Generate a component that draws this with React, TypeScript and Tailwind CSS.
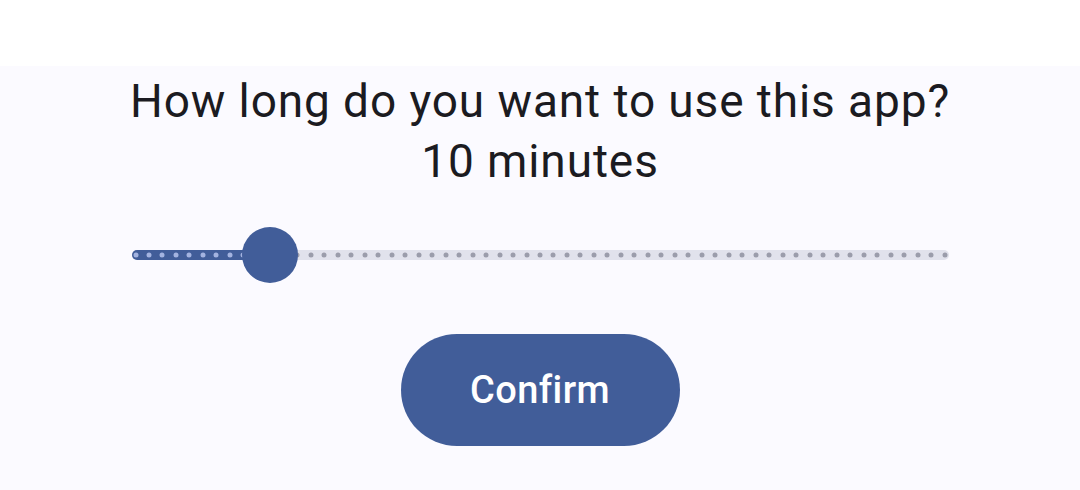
import React from "react";

const STEPS = 60;
const VALUE = 10;

function TimeSlider({ value }: { value: number }) {
  const pct = (value / STEPS) * 100;
  const ticks = Array.from({ length: STEPS + 1 }, (_, i) => i);

  return (
    <div className="relative h-14 w-full">
      {/* inactive track */}
      <div className="absolute left-0 right-0 top-1/2 h-[10px] -translate-y-1/2 rounded-full bg-[#e1e2ec]" />
      {/* active track */}
      <div
        className="absolute left-0 top-1/2 h-[10px] -translate-y-1/2 rounded-l-full bg-[#415d99]"
        style={{ width: `calc(4px + (100% - 8px) * ${value / STEPS})` }}
      />
      {/* tick marks */}
      <div className="absolute left-[4px] right-[4px] top-1/2 h-0">
        {ticks.map((i) => (
          <span
            key={i}
            className={
              "absolute top-0 h-[5px] w-[5px] -translate-x-1/2 -translate-y-1/2 rounded-full " +
              (i <= value ? "bg-[#a3b3e0]" : "bg-[#9b9dab]")
            }
            style={{ left: `${(i / STEPS) * 100}%` }}
          />
        ))}
      </div>
      {/* thumb */}
      <div
        className="absolute top-1/2 h-14 w-14 -translate-x-1/2 -translate-y-1/2 rounded-full bg-[#415d99]"
        style={{ left: `calc(4px + (100% - 8px) * ${pct / 100})` }}
      />
    </div>
  );
}

export default function App() {
  return (
    <div className="flex h-[490px] w-[1080px] flex-col bg-[#fbfaff] font-['Roboto',sans-serif]">
      <div className="h-[66px] bg-white" />
      <div className="flex flex-col items-center pt-[5px]">
        <p className="text-center text-[46px] leading-[60px] tracking-[0.9px] text-[#1b1b21]">
          How long do you want to use this app?
        </p>
        <p className="text-center text-[46px] leading-[60px] tracking-[0.9px] text-[#1b1b21]">
          {VALUE} minutes
        </p>
        <div className="mt-[36px] w-[817px]">
          <TimeSlider value={VALUE} />
        </div>
        <button className="mt-[51px] h-[112px] w-[279px] rounded-full bg-[#415d99] text-[38px] font-medium tracking-[0.4px] text-white">
          Confirm
        </button>
      </div>
    </div>
  );
}
